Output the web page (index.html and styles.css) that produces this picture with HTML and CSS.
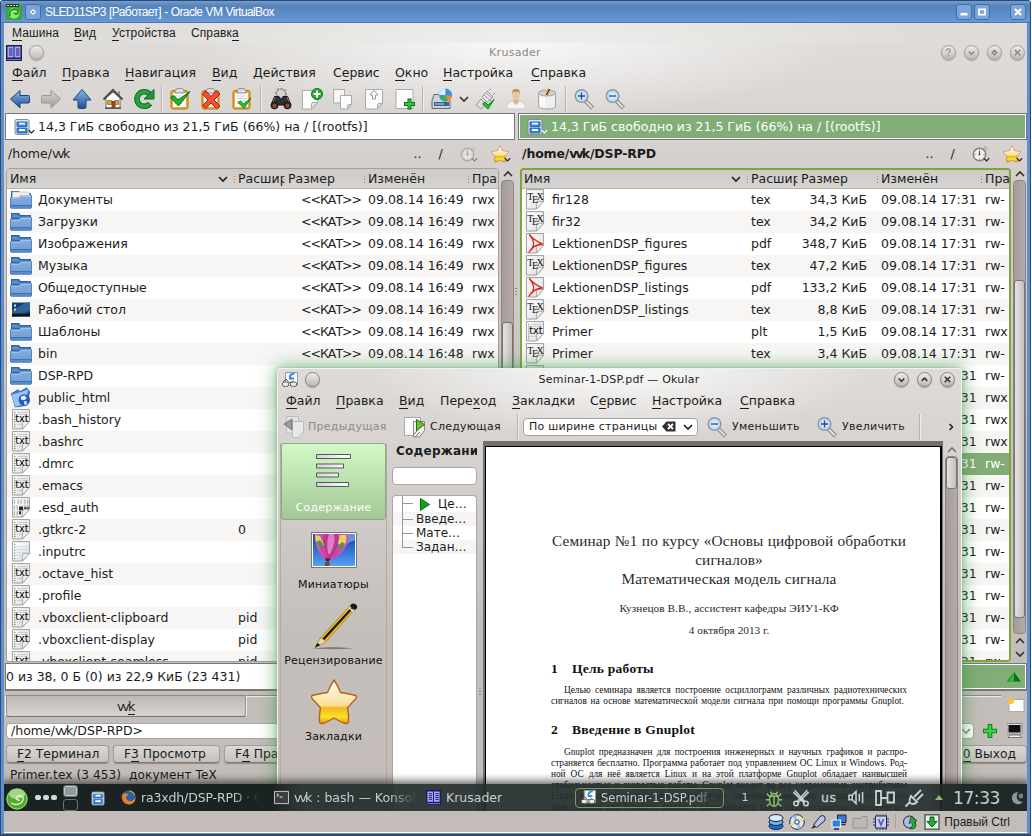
FILE: index.html
```html
<!DOCTYPE html>
<html lang="ru">
<head>
<meta charset="utf-8">
<title>SLED11SP3 [Работает] - Oracle VM VirtualBox</title>
<link rel="stylesheet" href="styles.css">
</head>
<body>
<svg class="defs" aria-hidden="true">
  <defs>
    <linearGradient id="gBlue" x1="0" y1="0" x2="0" y2="1"><stop offset="0" stop-color="#8db9e8"/><stop offset="1" stop-color="#1c4f94"/></linearGradient>
    <linearGradient id="gGray" x1="0" y1="0" x2="0" y2="1"><stop offset="0" stop-color="#d8d8d8"/><stop offset="1" stop-color="#9a9a9a"/></linearGradient>
    <linearGradient id="gGreen" x1="0" y1="0" x2="0" y2="1"><stop offset="0" stop-color="#3cc44c"/><stop offset="1" stop-color="#0a6e1c"/></linearGradient>
    <linearGradient id="gFold" x1="0" y1="0" x2="0" y2="1"><stop offset="0" stop-color="#86afe2"/><stop offset="1" stop-color="#6f9bd2"/></linearGradient>
    <linearGradient id="gPaper" x1="0" y1="0" x2="1" y2="1"><stop offset="0" stop-color="#fff"/><stop offset="1" stop-color="#dcdcdc"/></linearGradient>
    <linearGradient id="gStar" x1="0" y1="0" x2="0" y2="1"><stop offset="0" stop-color="#fffdf6"/><stop offset=".58" stop-color="#fbdf9a"/><stop offset=".64" stop-color="#f2b81c"/><stop offset=".85" stop-color="#fbe32a"/><stop offset="1" stop-color="#e9930c"/></linearGradient>
    <linearGradient id="gSky" x1="0" y1="0" x2="0" y2="1"><stop offset="0" stop-color="#0b3fae"/><stop offset="1" stop-color="#54a2f4"/></linearGradient>
    <linearGradient id="gBar" x1="0" y1="0" x2="1" y2="0"><stop offset="0" stop-color="#d4d4dc"/><stop offset="1" stop-color="#fff"/></linearGradient>
    <radialGradient id="gLens"><stop offset="0" stop-color="#eef6ff"/><stop offset="1" stop-color="#b5d2f2"/></radialGradient>

    <symbol id="left" viewBox="0 0 22 22"><path d="M1.5 11 L11 2.500 V7.500 H19.500 Q20.500 7.500 20.500 8.500 V14 Q20.500 15 19.500 15 H11 V20 Z" fill="url(#gBlue)" stroke="#1d4477"/></symbol>
    <symbol id="right" viewBox="0 0 22 22"><path d="M20.5 11 L11 2.500 V7.500 H2.500 Q1.500 7.500 1.500 8.500 V14 Q1.500 15 2.500 15 H11 V20 Z" fill="url(#gGray)" stroke="#999"/></symbol>
    <symbol id="up" viewBox="0 0 22 22"><path d="M11 1.500 L20 12 H15 V19 Q15 20.500 13.500 20.500 H8.500 Q7 20.500 7 19 V12 H2 Z" fill="url(#gBlue)" stroke="#1d4477"/></symbol>
    <symbol id="home" viewBox="0 0 22 22"><path d="M16 3h2v5h-2z" fill="#999"/><path d="M4 10 L11 4 L18 10 V20.500 H4Z" fill="#fff" stroke="#666"/><path d="M1.500 11.500 L11 2 L20.500 11.500" fill="none" stroke="#4d4d4d" stroke-width="2"/><path d="M5.500 12.500h4v4h-4zM12.500 12.500h4v4h-4z" fill="#e9a030" stroke="#945b14" stroke-width=".7"/><path d="M9.500 13h4v7h-4z" fill="#8b4a1c"/><path d="M3 20h16" stroke="#555" stroke-width="1.500"/></symbol>
    <symbol id="reload" viewBox="0 0 22 22"><path d="M17 15.500 A7.300 7.300 0 1 1 16.500 6" fill="none" stroke="#0d6b21" stroke-width="5.500"/><path d="M17 15.500 A7.300 7.300 0 1 1 16.500 6" fill="none" stroke="#2ba33c" stroke-width="3.500"/><path d="M21 1.500v9.500H11Z" fill="#23973a" stroke="#0d6b21"/></symbol>
    <symbol id="clip" viewBox="0 0 22 22"><rect x="2" y="2.500" width="17" height="18.500" rx="2" fill="#f0a72e" stroke="#bd7514"/><path d="M4 5h13v14H4z" fill="#fff"/><path d="M6 5V3q0-2.500 4.500-2.500T15 3v2z" fill="#dedede" stroke="#888"/><path d="M6 8h8M6 10.500h9M6 13h9M6 15.500h7" stroke="#ccc"/></symbol>
    <symbol id="clipok" viewBox="0 0 22 22"><use href="#clip"/><path d="M1.500 9.500 L5 7.500 L9 12 L21 3.500 L9.500 18Z" fill="#21b42f" stroke="#0a7517"/></symbol>
    <symbol id="clipx" viewBox="0 0 22 22"><use href="#clip"/><path d="M2.500 6 L6 3 L11 8.500 L16 3 L20 6 L14 12 L20 18 L16.500 20.500 L11 15 L6 20.500 L2.500 17.500 L8 12Z" fill="#f4502d" stroke="#a91b0b"/></symbol>
    <symbol id="clipsm" viewBox="0 0 22 22"><use href="#clip"/><path d="M7 14.500 L9.500 13 L12.500 16 L20 10 L13 20.500Z" fill="#21c42f" stroke="#0a7517" stroke-width=".8"/></symbol>
    <symbol id="find" viewBox="0 0 22 22"><circle cx="11" cy="5.500" r="4.500" fill="#d2d2d2" stroke="#888"/><circle cx="11" cy="5.500" r="5.300" fill="none" stroke="#999" stroke-width="1.600" stroke-dasharray="2 2"/><path d="M4.500 8.500 H9 L10 11 H12 L13 8.500 H17.500 L21 17 H1Z" fill="#303030" stroke="#161616"/><path d="M5 9l-2 5M17 9l2 5" stroke="#777"/><circle cx="4.500" cy="17.500" r="3.800" fill="#1c1c1c"/><circle cx="17.500" cy="17.500" r="3.800" fill="#1c1c1c"/><circle cx="4.500" cy="17.800" r="2.200" fill="#9a4a2a"/><circle cx="17.500" cy="17.800" r="2.200" fill="#9a4a2a"/></symbol>
    <symbol id="newtab" viewBox="0 0 22 22"><path d="M1.500 2.500h15v12l-6 6.500h-9z" fill="#fff" stroke="#aaa"/><path d="M10.500 21v-5q0-1.500 1.500-1.500h4.500z" fill="#e4e4e4" stroke="#aaa"/><circle cx="16" cy="6" r="5.500" fill="#28a832" stroke="#0f7a1a"/><path d="M16 2.500v7M12.500 6h7" stroke="#fff" stroke-width="2"/></symbol>
    <symbol id="duptab" viewBox="0 0 22 22"><path d="M1.500 1.500h11v10l-3 3.500h-8z" fill="#f6f6f6" stroke="#aaa"/><path d="M8.500 7.500h11v9l-4 4.500h-7z" fill="#fdfdfd" stroke="#aaa"/><path d="M15.500 21v-3q0-1.500 1.500-1.500h2.500z" fill="#ddd" stroke="#aaa"/></symbol>
    <symbol id="tabup" viewBox="0 0 22 22"><path d="M2.500 1.500h17v14l-5 5.500h-12z" fill="#fbfbfb" stroke="#aaa"/><path d="M14.500 21v-4q0-1.500 1.500-1.500h3.500z" fill="#ddd" stroke="#aaa"/><path d="M11 2.500l4 4.500h-2.500v4h-3V7H7z" fill="#fff" stroke="#999"/></symbol>
    <symbol id="tabadd" viewBox="0 0 22 22"><path d="M2 1.500h17v19H2z" fill="#fdfdfd" stroke="#aaa"/><path d="M15.500 10.500v11M10 16h11" stroke="#0e7217" stroke-width="4"/><path d="M15.500 11.500v9M11 16h9" stroke="#37c43c" stroke-width="2"/></symbol>
    <symbol id="disk" viewBox="0 0 22 22"><path d="M3 6.500h12l4 6v8H1v-8z" fill="#ccd3da" stroke="#667"/><path d="M3 14h15v4H3z" fill="#3a6494"/><path d="M4 16h9" stroke="#b4d8ff"/><circle cx="14.500" cy="7" r="6.500" fill="#3d8ee0"/><path d="M14.500 7V.500A6.500 6.500 0 0 0 8 7Z" fill="#d4efff"/><path d="M14.500 7L8.800 10A6.500 6.500 0 0 0 16 13.300Z" fill="#3fb34a"/><path d="M14.500 7L21 8A6.500 6.500 0 0 1 17 13Z" fill="#f08a1c"/></symbol>
    <symbol id="plug" viewBox="0 0 22 22"><path d="M2 17L7 11l5 5-5 5z" fill="#ddd" stroke="#999"/><path d="M8 9l5-6 6 6-6 5z" fill="#e9e9e9" stroke="#999"/><path d="M10 7l7 6M12 5l6 5M15 2l2-1M19 7l2-2" stroke="#999"/><path d="M8.500 16L11 14l3 3 6-5.500-6 9.500z" fill="#21c42f" stroke="#0a7517" stroke-width=".9"/></symbol>
    <symbol id="user" viewBox="0 0 22 22"><path d="M1.500 21q0-7 6-8h7q6 1 6 8z" fill="#f3f4f8" stroke="#c9cad2"/><path d="M9 10h4l1 4-3 3-3-3z" fill="#dcb48c"/><ellipse cx="11" cy="6.500" rx="4" ry="5.200" fill="#e8c6a2"/><path d="M6.800 6q0-5 4.200-5t4.200 5l-1-2.200H8z" fill="#b58a5c"/></symbol>
    <symbol id="bin" viewBox="0 0 22 22"><path d="M2.500 5v13q0 3 8.500 3t8.500-3V5z" fill="#efefef" stroke="#a5a5a5"/><ellipse cx="11" cy="5" rx="8.500" ry="3" fill="#cfcfcf" stroke="#a5a5a5"/><path d="M5 9v9M8 9.500v10" stroke="#fff" stroke-width="2"/><path d="M10.500 7L13.500 1" stroke="#dca821" stroke-width="3"/><path d="M10.500 7L13.500 1" stroke="#222"/></symbol>
    <symbol id="zin" viewBox="0 0 22 22"><path d="M12.500 13L19.500 20" stroke="#888" stroke-width="4"/><path d="M13 13.500L19 19.500" stroke="#e3e3e3" stroke-width="2"/><circle cx="8.500" cy="8" r="6.300" fill="url(#gLens)" stroke="#8c9bab" stroke-width="1.500"/><path d="M5 8h7M8.500 4.500v7" stroke="#234b83" stroke-width="1.300"/></symbol>
    <symbol id="zout" viewBox="0 0 22 22"><path d="M12.500 13L19.500 20" stroke="#888" stroke-width="4"/><path d="M13 13.500L19 19.500" stroke="#e3e3e3" stroke-width="2"/><circle cx="8.500" cy="8" r="6.300" fill="url(#gLens)" stroke="#8c9bab" stroke-width="1.500"/><path d="M5 8h7" stroke="#234b83" stroke-width="1.300"/></symbol>
    <symbol id="chev" viewBox="0 0 10 10"><path d="M1 3l4 4 4-4" fill="none" stroke="currentColor" stroke-width="1.600"/></symbol>
    <symbol id="chevup" viewBox="0 0 10 10"><path d="M1 7l4-4 4 4" fill="none" stroke="currentColor" stroke-width="1.600"/></symbol>

    <symbol id="cab" viewBox="0 0 16 16"><rect x="1" y=".500" width="14" height="15" rx="1.500" fill="#d8e2ee" stroke="#7d8b9b"/><path d="M3 3h10v4.500H3zM3 9h10v5H3z" fill="#3a86dc" stroke="#1d5cab" stroke-width=".8"/><path d="M5 4.700h6M5 11h6" stroke="#fff" stroke-width="1.800"/></symbol>
    <symbol id="clock" viewBox="0 0 16 16"><circle cx="7.500" cy="8.500" r="6.200" fill="#f2f2f2" stroke="#858585" stroke-width="1.500"/><circle cx="13.500" cy="2.500" r="1.500" fill="#ddd" stroke="#999"/><path d="M7.500 8.500V5" stroke="#c33" stroke-width="1.200"/><circle cx="7.500" cy="8.500" r="1" fill="#555"/><path d="M7.500 3.500v1M7.500 12.500v1M2.500 8.500h1M11.500 8.500h1" stroke="#777"/></symbol>
    <symbol id="star" viewBox="0 0 48 48"><path d="M24 2 Q28 8 30.500 14.500 Q38 15.500 46 17.500 Q47 19 46 20.500 Q41.500 25 37.500 30 Q39 37 38.500 44.500 Q37 46 35.500 45.500 Q29.500 43.500 24 40 Q18.500 43.500 12.500 45.500 Q11 46 9.500 44.500 Q9 37 10.500 30 Q6.500 25 2 20.500 Q1 19 2 17.500 Q10 15.500 17.500 14.500 Q20 8 24 2Z" fill="url(#gStar)" stroke="#b4641a" stroke-width="1.400" stroke-linejoin="round"/></symbol>

    <symbol id="folder" viewBox="0 0 22 20"><path d="M1 19V1.500H9l1.500 2H21V19z" fill="#2f64a5"/><path d="M2 6V3h6l1.500 2H20v2z" fill="#5b8fd0"/><path d="M.500 18.500V8H9l2-2h10.500v12.500z" fill="url(#gFold)" stroke="#3c71b3" stroke-width=".8"/><path d="M1 8.600H9.200l2-2H21" fill="none" stroke="#b5dcf8" stroke-width=".8"/><path d="M.500 15.500h21v1.500H.500z" fill="#3f73b3"/></symbol>
    <symbol id="folderdoc" viewBox="0 0 22 20"><use href="#folder"/><path d="M2.500 2.500h17V6h-9l-2 2h-6z" fill="#f1f1ee" stroke="#bbb" stroke-width=".6"/></symbol>
    <symbol id="desk" viewBox="0 0 22 20"><path d="M2 3h18v14H2z" fill="#163f74"/><path d="M2 17V11L16 3h4v8L8 17z" fill="#2c6699"/><path d="M2 14h18v3H2z" fill="#0b1524"/><path d="M4 5h2v2H4z" fill="#9fd"/><path d="M4 9h2v2H4z" fill="#dc7"/></symbol>
    <symbol id="html" viewBox="0 0 22 22"><path d="M1 7L8 3l2 2 7-4 3 4-3 14-12 2z" fill="#3c7fd8" stroke="#2359a8"/><path d="M1 8l11-3 7-3-5 16-9 3z" fill="#94c5f8"/><circle cx="14.500" cy="13.500" r="6" fill="#2b5bc0"/><path d="M11 10l4-1 2 3-3 2-3-1zM14 15l3 0 0 3-2 1z" fill="#e8f2ff"/></symbol>
    <symbol id="page" viewBox="0 0 20 22"><path d="M1 .600h18v12.400l-7.500 8H1z" fill="url(#gPaper)" stroke="#999"/><path d="M11.500 21v-6q0-2 2-2H19z" fill="#eee" stroke="#999" stroke-width=".8"/></symbol>
    <symbol id="txt" viewBox="0 0 20 22"><use href="#page"/><path d="M3.500 3v16" stroke="#444" stroke-dasharray="1 1.500"/><path d="M6 3.500h11M6 5.500h11M6 16h5" stroke="#bbb" stroke-width=".8"/><text x="4" y="14" font-family="DejaVu Sans, sans-serif" font-size="11" fill="#000" textLength="14" lengthAdjust="spacingAndGlyphs">txt</text></symbol>
    <symbol id="tex" viewBox="0 0 20 22"><use href="#page"/><text font-family="Liberation Serif, serif" font-size="10.500" fill="#111"><tspan x="2" y="12">T</tspan><tspan x="6.800" y="14.500">E</tspan><tspan x="11.500" y="12">X</tspan></text></symbol>
    <symbol id="pdf" viewBox="0 0 20 22"><use href="#page"/><path d="M4 1.500Q9 8 18 11.500M18 11.500Q8 12 3.500 20.500M4 1.500Q12 10 6 18" fill="none" stroke="#e2211c" stroke-width="1.500"/></symbol>
    <symbol id="note" viewBox="0 0 20 22"><use href="#page"/><path d="M3.500 3v16" stroke="#555" stroke-dasharray="1 2"/><path d="M5 6h13M5 9h13M5 12h12M5 15h6" stroke="#b5d6f2" stroke-width=".8"/></symbol>
    <symbol id="binf" viewBox="0 0 20 22"><use href="#page"/><path d="M3 3v4M7 3v4M10 3v4M14 3v4M17 3v4M3 9v4M6 9v4M14 8v3M17 8v3M3 15v4M6 15v4" stroke="#aaa" stroke-width="1.200"/><path d="M8 10h4v4H8zM8 15h2v3H8z" fill="#222"/><path d="M13 10.500h3v2h-3zM16.500 10.500h2v2h-2z" fill="#555"/></symbol>

    <symbol id="krus" viewBox="0 0 16 16"><path d="M0 0h16v16H0z" fill="#1d1d58"/><path d="M1.500 1.500h6v11h-6zM8.500 1.500h6v11h-6z" fill="#a5a5ff"/><path d="M3 4h3.500M3 6h3.500M3 8h3.500M3 10h3.500M10 4h3.500M10 6h3.500M10 8h3.500M10 10h3.500" stroke="#20205c" stroke-width="1"/><path d="M1 14.500h14" stroke="#7a7ad0"/></symbol>
    <symbol id="oku" viewBox="0 0 16 16"><path d="M3.500.500h12v13h-12z" fill="#f7f7f7" stroke="#999"/><path d="M12.500 1.500q-5 0-4.500 5h4" fill="none" stroke="#2a8ade" stroke-width="2"/><path d="M.500 11q0-1 3-1t3 1v2q0 1.500-3 1.500t-3-1.500zM8.500 11q0-1 3-1t3 1v2q0 1.500-3 1.500t-3-1.500z" fill="#ececec" stroke="#555" stroke-width=".9"/><path d="M1 10l3-3 3 3.500h2L11.500 9" fill="none" stroke="#555"/></symbol>
    <symbol id="prev" viewBox="0 0 22 22"><path d="M4.500.500h12V17h-12z" fill="#e6e4e3" stroke="#bbb"/><path d="M10.500 5.500h11v10l-5 6h-6z" fill="#ebe9e8" stroke="#bbb"/><path d="M2 8l8-5v11z" fill="#9a9a9a" stroke="#777"/></symbol>
    <symbol id="next" viewBox="0 0 22 22"><path d="M.500 1.500h16v18h-16z" fill="#fcfcfc" stroke="#a9a9a9"/><path d="M9.500 5.500h11v9l-5 6.500h-6z" fill="#efefef" stroke="#888"/><path d="M12.500 3.500l8 5-8 6z" fill="#6cc42c" stroke="#2c6c10"/><path d="M9 19l5-5M11 21l5-5" stroke="#777"/></symbol>
    <symbol id="pencil" viewBox="0 0 48 48"><path d="M2 46.500q20-3 42 0q-20 1.500-42 0z" fill="#000" opacity=".35"/><path d="M5 45.500L10.500 36L40.500 3.500L45 7L15.500 40Z" fill="#f2c12a" stroke="#8a6a10" stroke-width=".7"/><path d="M12 37L42 4.500l1.700 1.400L14 38.600z" fill="#1c1c1c"/><path d="M5 45.500L10.500 36L13 37L15.500 40Z" fill="#ead9a6" stroke="#998657" stroke-width=".5"/><path d="M5 45.500L7.500 41L10.300 43Z" fill="#111"/><path d="M40 4Q42 0 46 2.500Q49 5.500 45 8z" fill="#161616"/><path d="M38.800 5.500l4.600 4" stroke="#e8e8e8" stroke-width="1.600"/></symbol>
    <symbol id="toc" viewBox="0 0 36 34"><g fill="url(#gBar)" stroke="#555a55"><path d="M.500.500h34v4h-34zM.500 10h27v4h-27zM.500 19h22v4h-22zM.500 28.500h32v4h-32z"/></g></symbol>
    <symbol id="balloon" viewBox="0 0 46 36"><path d="M.500.500h45v35h-45z" fill="#fff" stroke="#777"/><path d="M2 2h42v32H2z" fill="url(#gSky)"/><path d="M44 2v6q-12 4-20 14l9-20z" fill="#8fb4e8" opacity=".7"/><path d="M3.500 2H36Q40 13 29 22L20 28H14Q3 16 3.500 2z" fill="#d04fb0"/><path d="M13 2h14q3 9-4 20l-4 5h-4Q10 12 13 2z" fill="#b23d90"/><path d="M18 2h5q2 9-4 20h-2Q15 10 18 2z" fill="#e07cc8"/><path d="M4 3l5 1 4 9-4 4Q4 10 4 3zM29 3l6 0q2 8-4 13l-4-5z" fill="#e8cf62"/><path d="M5 10l4-2 4 6-4 3zM31 10l3 2-4 7-4-4z" fill="#5f8a66"/><path d="M9 16l5-1 2 11h-2zM26 17l3 3-7 7-1-2z" fill="#dd3aa6"/><path d="M14 26.500h6l-2.500 3h-2z" fill="#4b1d30"/><path d="M14 30h4.500v4H14z" fill="#7a4a22"/></symbol>
  </defs>
</svg>

<div class="vm">
  <header class="vm-title">
    <svg class="vm-logo" viewBox="0 0 16 16"><path d="M0 0h16v16H0z" fill="#39a839"/><path d="M0 0h13v3H0z" fill="#333"/><path d="M1 1.500h11" stroke="#ddd" stroke-dasharray="2 1"/><circle cx="8" cy="9" r="5.500" fill="#8bea74"/><path d="M4 12q-2-6 4-7 5 0 4 4-2 2-4 0" fill="none" stroke="#18801c" stroke-width="1.500"/></svg>
    <span class="tbtn"><svg viewBox="0 0 16 16"><path d="M8 4.500L11.500 8 8 11.500 4.500 8z" fill="#fff"/><path d="M7 7h2v2H7z" fill="#4f80bd"/></svg></span>
    <span class="vm-name">SLED11SP3 [Работает] - Oracle VM VirtualBox</span>
    <span class="tbtn"><svg viewBox="0 0 16 16"><path d="M4 10.500h8" stroke="#fff" stroke-width="3"/></svg></span>
    <span class="tbtn"><svg viewBox="0 0 16 16"><path d="M4.500 5h7v6h-7z" fill="none" stroke="#fff" stroke-width="2"/></svg></span>
    <span class="tbtn last"><svg viewBox="0 0 16 16"><path d="M4.500 4.500l7 7M11.500 4.500l-7 7" stroke="#fff" stroke-width="2.500"/></svg></span>
  </header>

  <div class="vm-body">
    <nav class="vm-menu"><span><u>М</u>ашина</span><span><u>В</u>ид</span><span><u>У</u>стройства</span><span>Справк<u>а</u></span></nav>

    <div class="guest">
      <div class="kr-title">
        <svg class="i16"><use href="#krus"/></svg><i class="orb"></i>
        <span class="kr-name">Krusader</span>
        <i class="orb"><svg viewBox="0 0 14 14"><path d="M5 5q0-2 2-2t2 2q0 1-2 2.500M7 9.500v1.500" fill="none" stroke="#888" stroke-width="1.200"/></svg></i>
        <i class="orb"><svg viewBox="0 0 14 14"><path d="M4 6l3 3 3-3" fill="none" stroke="#888" stroke-width="1.500"/></svg></i>
        <i class="orb"><svg viewBox="0 0 14 14"><path d="M7 4.500L9.500 7 7 9.500 4.500 7z" fill="none" stroke="#888" stroke-width="1.500"/></svg></i>
        <i class="orb"><svg viewBox="0 0 14 14"><path d="M4 4l6 6M10 4l-6 6" stroke="#888" stroke-width="1.500"/></svg></i>
      </div>
      <nav class="kr-menu"><span><u>Ф</u>айл</span><span><u>П</u>равка</span><span><u>Н</u>авигация</span><span><u>В</u>ид</span><span>Дей<u>с</u>твия</span><span>С<u>е</u>рвис</span><span><u>О</u>кно</span><span><u>Н</u>астройка</span><span><u>С</u>правка</span></nav>
      <div class="kr-tools">
        <svg><use href="#left"/></svg><svg><use href="#right"/></svg><svg><use href="#up"/></svg><svg><use href="#home"/></svg><svg><use href="#reload"/></svg>
        <b class="s6"></b><svg><use href="#clipok"/></svg><svg><use href="#clipx"/></svg><svg><use href="#clipsm"/></svg>
        <b class="s8"></b><svg><use href="#find"/></svg><svg><use href="#newtab"/></svg><svg><use href="#duptab"/></svg><svg><use href="#tabup"/></svg><svg><use href="#tabadd"/></svg>
        <b class="s7"></b><svg><use href="#disk"/></svg><svg class="arr"><use href="#chev"/></svg><svg><use href="#plug"/></svg><svg><use href="#user"/></svg><svg><use href="#bin"/></svg>
        <b class="s6"></b><svg><use href="#zin"/></svg><svg><use href="#zout"/></svg>
      </div>

      <div class="panels">
        <section class="panel pl">
          <div class="info"><svg class="i16"><use href="#cab"/></svg><svg class="tiny"><use href="#chev"/></svg><span>14,3 ГиБ свободно из 21,5 ГиБ (66%) на / [(rootfs)]</span></div>
          <div class="path"><span class="where">/home/<s>vv</s>k</span><span class="pb">..</span><span class="pb">/</span><span class="pi off"><svg class="i16"><use href="#clock"/></svg><svg class="tiny"><use href="#chev"/></svg></span><span class="pi"><svg class="i18"><use href="#star"/></svg><svg class="tiny"><use href="#chev"/></svg></span></div>
          <div class="listwrap">
            <div class="list">
              <div class="head"><span class="h1">Имя<svg><use href="#chev"/></svg></span><span>Расшир</span><span>Размер</span><span>Изменён</span><span>Пра</span></div>
              <div class="rows">
                <div class="row"><svg><use href="#folderdoc"/></svg><span>Документы</span><span></span><span>&lt;&lt;КАТ&gt;&gt;</span><span>09.08.14 16:49</span><span>rwx</span></div>
                <div class="row"><svg><use href="#folder"/></svg><span>Загрузки</span><span></span><span>&lt;&lt;КАТ&gt;&gt;</span><span>09.08.14 16:49</span><span>rwx</span></div>
                <div class="row"><svg><use href="#folder"/></svg><span>Изображения</span><span></span><span>&lt;&lt;КАТ&gt;&gt;</span><span>09.08.14 16:49</span><span>rwx</span></div>
                <div class="row"><svg><use href="#folder"/></svg><span>Музыка</span><span></span><span>&lt;&lt;КАТ&gt;&gt;</span><span>09.08.14 16:49</span><span>rwx</span></div>
                <div class="row"><svg><use href="#folder"/></svg><span>Общедоступные</span><span></span><span>&lt;&lt;КАТ&gt;&gt;</span><span>09.08.14 16:49</span><span>rwx</span></div>
                <div class="row"><svg><use href="#desk"/></svg><span>Рабочий стол</span><span></span><span>&lt;&lt;КАТ&gt;&gt;</span><span>09.08.14 16:49</span><span>rwx</span></div>
                <div class="row"><svg><use href="#folder"/></svg><span>Шаблоны</span><span></span><span>&lt;&lt;КАТ&gt;&gt;</span><span>09.08.14 16:49</span><span>rwx</span></div>
                <div class="row"><svg><use href="#folder"/></svg><span>bin</span><span></span><span>&lt;&lt;КАТ&gt;&gt;</span><span>09.08.14 16:48</span><span>rwx</span></div>
                <div class="row"><svg><use href="#folder"/></svg><span>DSP-RPD</span></div>
                <div class="row"><svg><use href="#html"/></svg><span>public_html</span></div>
                <div class="row"><svg><use href="#txt"/></svg><span>.bash_history</span></div>
                <div class="row"><svg><use href="#txt"/></svg><span>.bashrc</span></div>
                <div class="row"><svg><use href="#txt"/></svg><span>.dmrc</span></div>
                <div class="row"><svg><use href="#txt"/></svg><span>.emacs</span></div>
                <div class="row"><svg><use href="#binf"/></svg><span>.esd_auth</span></div>
                <div class="row"><svg><use href="#txt"/></svg><span>.gtkrc-2</span><span>0</span></div>
                <div class="row"><svg><use href="#note"/></svg><span>.inputrc</span></div>
                <div class="row"><svg><use href="#txt"/></svg><span>.octave_hist</span></div>
                <div class="row"><svg><use href="#txt"/></svg><span>.profile</span></div>
                <div class="row"><svg><use href="#txt"/></svg><span>.vboxclient-clipboard</span><span>pid</span></div>
                <div class="row"><svg><use href="#txt"/></svg><span>.vboxclient-display</span><span>pid</span></div>
                <div class="row"><svg><use href="#txt"/></svg><span>.vboxclient-seamless</span><span>pid</span></div>
              </div>
            </div>
            <div class="sb"><svg><use href="#chevup"/></svg><div class="trough"><i class="thumb tl"></i></div><svg><use href="#chevup"/></svg><svg><use href="#chev"/></svg></div>
          </div>
          <div class="totals">0 из 38, 0 Б (0) из 22,9 КиБ (23 431)</div>
          <div class="tabs"><span class="tab"><s>vv</s><u>k</u></span></div>
        </section>
        <div class="split"><i class="grip"></i></div>
        <section class="panel pr">
          <div class="info"><svg class="i16"><use href="#cab"/></svg><svg class="tiny"><use href="#chev"/></svg><span>14,3 ГиБ свободно из 21,5 ГиБ (66%) на / [(rootfs)]</span></div>
          <div class="path"><span class="where">/home/<s>vv</s>k/DSP-RPD</span><span class="pb">..</span><span class="pb">/</span><span class="pi"><svg class="i16"><use href="#clock"/></svg><svg class="tiny"><use href="#chev"/></svg></span><span class="pi"><svg class="i18"><use href="#star"/></svg><svg class="tiny"><use href="#chev"/></svg></span></div>
          <div class="listwrap">
            <div class="list">
              <div class="head"><span class="h1">Имя<svg><use href="#chev"/></svg></span><span>Расшир</span><span>Размер</span><span>Изменён</span><span>Пра</span></div>
              <div class="rows">
                <div class="row"><svg><use href="#tex"/></svg><span>fir128</span><span>tex</span><span>34,3 КиБ</span><span>09.08.14 17:31</span><span>rw-</span></div>
                <div class="row"><svg><use href="#tex"/></svg><span>fir32</span><span>tex</span><span>34,2 КиБ</span><span>09.08.14 17:31</span><span>rw-</span></div>
                <div class="row"><svg><use href="#pdf"/></svg><span>LektionenDSP_figures</span><span>pdf</span><span>348,7 КиБ</span><span>09.08.14 17:31</span><span>rw-</span></div>
                <div class="row"><svg><use href="#tex"/></svg><span>LektionenDSP_figures</span><span>tex</span><span>47,2 КиБ</span><span>09.08.14 17:31</span><span>rw-</span></div>
                <div class="row"><svg><use href="#pdf"/></svg><span>LektionenDSP_listings</span><span>pdf</span><span>133,2 КиБ</span><span>09.08.14 17:31</span><span>rw-</span></div>
                <div class="row"><svg><use href="#tex"/></svg><span>LektionenDSP_listings</span><span>tex</span><span>8,8 КиБ</span><span>09.08.14 17:31</span><span>rw-</span></div>
                <div class="row"><svg><use href="#txt"/></svg><span>Primer</span><span>plt</span><span>1,5 КиБ</span><span>09.08.14 17:31</span><span>rwx</span></div>
                <div class="row"><svg><use href="#tex"/></svg><span>Primer</span><span>tex</span><span>3,4 КиБ</span><span>09.08.14 17:31</span><span>rw-</span></div>
                <div class="row"><svg><use href="#tex"/></svg><span></span><span></span><span></span><span>09.08.14 17:31</span><span>rw-</span></div>
                <div class="row"><i></i><span></span><span></span><span></span><span>09.08.14 17:31</span><span>rwx</span></div>
                <div class="row"><i></i><span></span><span></span><span></span><span>09.08.14 17:31</span><span>rwx</span></div>
                <div class="row"><i></i><span></span><span></span><span></span><span>09.08.14 17:31</span><span>rwx</span></div>
                <div class="row sel"><i></i><span></span><span></span><span></span><span>09.08.14 17:31</span><span>rw-</span></div>
                <div class="row"><i></i><span></span><span></span><span></span><span>09.08.14 17:31</span><span>rw-</span></div>
                <div class="row"><i></i><span></span><span></span><span></span><span>09.08.14 17:31</span><span>rw-</span></div>
                <div class="row"><i></i><span></span><span></span><span></span><span>09.08.14 17:31</span><span>rw-</span></div>
                <div class="row"><i></i><span></span><span></span><span></span><span>09.08.14 17:31</span><span>rw-</span></div>
                <div class="row"><i></i><span></span><span></span><span></span><span>09.08.14 17:31</span><span>rw-</span></div>
                <div class="row"><i></i><span></span><span></span><span></span><span>09.08.14 17:31</span><span>rw-</span></div>
                <div class="row"><i></i><span></span><span></span><span></span><span>09.08.14 17:31</span><span>rw-</span></div>
                <div class="row"><i></i><span></span><span></span><span></span><span>09.08.14 17:31</span><span>rw-</span></div>
                <div class="row"><i></i><span></span><span></span><span></span><span>09.08.14 17:31</span><span>rw-</span></div>
              </div>
            </div>
            <div class="sb"><svg><use href="#chevup"/></svg><div class="trough"><i class="thumb tr"></i></div><svg><use href="#chevup"/></svg><svg><use href="#chev"/></svg></div>
          </div>
          <div class="totals"><svg viewBox="0 0 14 10"><path d="M7 0l7 9.500H0z" fill="#0d6e14"/><path d="M7 0v9.500H1z" fill="#35b53c"/></svg></div>
          <div class="tabs"><svg viewBox="0 0 18 16"><path d="M2 2.500h15v12H2z" fill="#fdfdfd" stroke="#aaa"/><circle cx="4" cy="4" r="3" fill="#f7c531"/></svg></div>
        </section>
      </div>

      <div class="cmd"><span class="cmdline">/home/<s>vv</s>k/DSP-RPD&gt;</span><span class="combo"><svg><use href="#chev"/></svg></span>
        <svg class="i16" viewBox="0 0 16 16"><path d="M8 1v14M1 8h14" stroke="#0c8418" stroke-width="4.600"/><path d="M8 2v12M2 8h12" stroke="#42d14c" stroke-width="2.400"/></svg>
        <svg class="i16" viewBox="0 0 16 16"><path d="M0 .500h15v10.500H0z" fill="#ddd" stroke="#888"/><path d="M1.500 2h12v7.500h-12z" fill="#111"/><path d="M3 12h10l2 2.500H1z" fill="#eee" stroke="#777"/></svg>
      </div>
      <div class="fn"><span><u>F</u>2 Терминал</span><span>F<u>3</u> Просмотр</span><span>F<u>4</u> Правка</span><i></i><span>F1<u>0</u> Выход</span></div>
      <div class="kr-status">Primer.tex (3 453)&nbsp; документ TeX</div>

      <div class="okular">
        <div class="ok-title"><svg class="i16"><use href="#oku"/></svg><i class="orb"></i><span>Seminar-1-DSP.pdf — Okular</span>
          <i class="orb"><svg viewBox="0 0 14 14"><path d="M4 6l3 3 3-3" fill="none" stroke="#333" stroke-width="1.600"/></svg></i>
          <i class="orb"><svg viewBox="0 0 14 14"><path d="M4 8.500l3-3 3 3" fill="none" stroke="#333" stroke-width="1.600"/></svg></i>
          <i class="orb"><svg viewBox="0 0 14 14"><path d="M4 4l6 6M10 4l-6 6" stroke="#333" stroke-width="1.600"/></svg></i>
        </div>
        <nav class="ok-menu"><span><u>Ф</u>айл</span><span><u>П</u>равка</span><span><u>В</u>ид</span><span>Пере<u>х</u>од</span><span><u>З</u>акладки</span><span>С<u>е</u>рвис</span><span><u>Н</u>астройка</span><span><u>С</u>правка</span></nav>
        <div class="ok-tools">
          <svg class="i22"><use href="#prev"/></svg><span class="dim t1">Предыдущая</span>
          <svg class="i22"><use href="#next"/></svg><span class="t2">Следующая</span><b></b>
          <span class="zoombox"><span>По ширине страницы</span><svg class="clr" viewBox="0 0 14 11"><path d="M0 5.500L4.500.500H13.500v10H4.500z" fill="#333"/><path d="M6 3l5 5M11 3L6 8" stroke="#fff" stroke-width="1.800"/></svg><svg class="i10"><use href="#chev"/></svg></span>
          <svg class="i22"><use href="#zout"/></svg><span class="t3">Уменьшить</span>
          <svg class="i22"><use href="#zin"/></svg><span class="t4">Увеличить</span><b></b>
          <svg class="more" viewBox="0 0 6 8"><path d="M1.500 1l3 3-3 3" fill="none" stroke="#222" stroke-width="1.500"/></svg>
        </div>
        <div class="ok-main">
          <div class="side">
            <div class="item on"><svg class="toc"><use href="#toc"/></svg><span>Содержание</span></div>
            <div class="item"><svg class="bal"><use href="#balloon"/></svg><span>Миниатюры</span></div>
            <div class="item"><svg class="i48"><use href="#pencil"/></svg><span>Рецензирование</span></div>
            <div class="item"><svg class="i48"><use href="#star"/></svg><span>Закладки</span></div>
          </div>
          <div class="contents">
            <div class="ctitle">Содержание</div>
            <div class="search"></div>
            <div class="tree">
              <div><i></i><svg viewBox="0 0 10 13"><path d="M.500.500l9 6-9 6z" fill="#13a01f" stroke="#0a7015"/></svg>Це…</div>
              <div><i></i>Введе…</div>
              <div><i></i>Мате…</div>
              <div><i></i>Задан…</div>
            </div>
          </div>
          <div class="oksplit"><i class="grip"></i></div>
          <div class="view">
            <article class="sheet">
              <div class="ln t jt">Семинар №1 по курсу «Основы цифровой обработки</div>
              <div class="ln t">сигналов»</div>
              <div class="ln t">Математическая модель сигнала</div>
              <div class="ln au">Кузнецов В.В., ассистент кафедры ЭИУ1-КФ</div>
              <div class="ln dt">4 октября 2013 г.</div>
              <h2 class="sec1"><span>1</span>Цель работы</h2>
              <div class="ln p in">Целью семинара является построение осциллограмм различных радиотехнических</div>
              <div class="ln p sh">сигналов на основе математической модели сигнала при помощи программы Gnuplot.</div>
              <h2 class="sec2"><span>2</span>Введение в Gnuplot</h2>
              <div class="ln p in">Gnuplot предназначен для построения инженерных и научных графиков и распро-</div>
              <div class="ln p">страняется бесплатно. Программа работает под управлением ОС Linux и Windows. Род-</div>
              <div class="ln p">ной ОС для неё является Linux и на этой платформе Gnuplot обладает наивысшей</div>
              <div class="ln p">стабильностью и скоростью работы. Gnuplot входит во все современные дистрибутивы</div>
              <div class="ln p">Linux и доступен для установки через пакетный менеджер. Скачать установоч-</div>
              <div class="ln p last">щик Gnuplot для Windows можно с официального сайта <code>http://gnuplot.sourceforge.</code></div>
            </article>
          </div>
          <div class="sb ok"><svg><use href="#chevup"/></svg><div class="trough"><i class="thumb to"></i></div></div>
        </div>
      </div>

      <div class="taskbar">
        <svg class="suse" viewBox="0 0 22 22"><circle cx="11" cy="11" r="10.700" fill="#58a72f"/><ellipse cx="11" cy="6" rx="8" ry="5" fill="#a4d68a"/><circle cx="11" cy="11" r="10" fill="none" stroke="#9ed47c"/><path d="M5 15q5 3 10 0 4-4 1-7-5-1-6 2 1 3 4 2" fill="none" stroke="#dff4cf" stroke-width="1.300"/></svg>
        <span class="dots"><i></i><i></i><i></i></span>
        <span class="pager"><i></i><i></i></span>
        <svg class="cabt"><use href="#cab"/></svg>
        <span class="task k1"><svg viewBox="0 0 16 16"><circle cx="8" cy="8" r="7.500" fill="#2a5cb0"/><path d="M1 5Q1 15 9 15.500 16 15 15.500 7 14 12 9 12 5 11 5.500 7L8 5Q5 2 1 5z" fill="#ee7d1b"/><path d="M8 .500q6 0 7.500 6L12 3z" fill="#f6b62c"/></svg><span>ra3xdh/DSP-RPD · G</span></span>
        <span class="task k2"><svg viewBox="0 0 16 16"><path d="M.500 1.500h15v13H.500z" fill="#3b3f3f" stroke="#ccc"/><path d="M3 4l2 1.500L3 7M6 7.500h3" fill="none" stroke="#fff"/></svg><span><s>vv</s>k : bash — Konsole</span></span>
        <span class="task k3"><svg><use href="#krus"/></svg><span>Krusader</span></span>
        <span class="task k4"><svg><use href="#oku"/></svg><span>Seminar-1-DSP.pdf — Okular</span></span>
        <span class="num">1</span>
        <svg class="tray y1" viewBox="0 0 20 22" fill="none" stroke="#86c070" stroke-width="1.600"><ellipse cx="10" cy="13" rx="5" ry="7"/><path d="M10 8v12M5.500 9h9M6 4l2 3M14 4l-2 3M1 13h4M15 13h4M2 6l3.500 4M18 6l-3.500 4M2 20l3.500-3M18 20l-3.500-3"/></svg>
        <svg class="tray y2" viewBox="0 0 20 20" fill="none" stroke="#c8d4d4" stroke-width="1.700"><path d="M3 1.500l11.500 13M17 1.500L5 14.500M1.500 3.500l12 12M18.500 3.500l-12 12"/><circle cx="4.500" cy="16" r="2.500"/><circle cx="15.500" cy="16" r="2.500"/></svg>
        <span class="us">us</span>
        <svg class="tray y3" viewBox="0 0 18 16" fill="none" stroke="#c8d4d4" stroke-width="1.600"><path d="M1 5.500h3.500v5H1zM4.500 5.500l4-4v13l-4-4M12 4v8M15.500 2v12"/></svg>
        <svg class="tray y4" viewBox="0 0 20 16" fill="none" stroke="#c8d4d4" stroke-width="1.800"><path d="M1 1h5v14H1zM6 8h6M19 2.500h-6.500v10H19z"/></svg>
        <svg class="tray y5" viewBox="0 0 20 20" fill="none" stroke="#c8d4d4" stroke-width="1.800"><path d="M1.500 18.500l4-4M7 8l6 6q-3 3-6 1.500T7 8zM10 9l7-7M13 12l6-6"/></svg>
        <svg class="tri" viewBox="0 0 8 5"><path d="M4 0l4 5H0z" fill="#86c070"/></svg>
        <span class="time">17:33</span>
        <svg class="cash" viewBox="0 0 12 14"><path d="M7 1Q0 2 1 8t8 5l3-2-4-1Q4 8 7 1z" fill="#8c9797"/><circle cx="10" cy="5" r="2.500" fill="#707b7b"/></svg>
      </div>
    </div>

    <footer class="vm-status">
      <svg viewBox="0 0 16 16"><ellipse cx="8" cy="12" rx="7" ry="3.500" fill="#1a6fd4" stroke="#123"/><ellipse cx="8" cy="8" rx="7" ry="3.500" fill="#6eb3f5" stroke="#123"/><ellipse cx="8" cy="4" rx="7" ry="3.500" fill="#d7ecff" stroke="#123"/></svg>
      <svg viewBox="0 0 16 16"><circle cx="8" cy="8" r="7.300" fill="#dfe6f2" stroke="#1d2c55"/><path d="M8 8L3 2l4-1zM8 8l5 6-4 1z" fill="#7bc4f0"/><path d="M8 8L1 10v3zM8 8l7-2v-3z" fill="#f2d277"/><circle cx="8" cy="8" r="2.200" fill="#fff" stroke="#1d2c55"/></svg>
      <svg viewBox="0 0 16 16"><path d="M1 15l3-4 2 2z" fill="#222"/><path d="M3.500 11L10 2.500q3-2 4.500 0t0 4.500L6.500 13.500z" fill="#b9c3ea" stroke="#223"/></svg>
      <svg viewBox="0 0 16 16"><path d="M6.500 1h8.500v7.500H6.500z" fill="#2a7fe0" stroke="#223"/><path d="M1 6h8.500v7H1z" fill="#2a7fe0" stroke="#eef" stroke-width="1.200"/><path d="M3 15h5M10.500 10.500h4" stroke="#223" stroke-width="1.500"/></svg>
      <svg viewBox="0 0 16 16"><path d="M1 14V4.500h8l1.500-2H15V14z" fill="#bdb8b5" stroke="#96918e"/></svg>
      <svg viewBox="0 0 16 16"><path d="M2.500 2h11v12h-11z" fill="#c6ccf2" stroke="#1d2c66"/><path d="M4 .500v1.500M7 .500v1.500M10 .500v1.500M13 .500v1.500M4 14v2M7 14v2M10 14v2M13 14v2M0 5h2M0 8h2M0 11h2M14 5h2M14 8h2M14 11h2" stroke="#1d2c66"/><path d="M5.500 5L8 11l2.500-6" fill="none" stroke="#4c5aa6" stroke-width="1.500"/></svg>
      <b></b>
      <svg viewBox="0 0 16 16"><circle cx="6.500" cy="8" r="6" fill="#aebbe8" stroke="#223"/><path d="M8 2.500l6 4-2.500 1.500q3 3 0 6.500L7 15q4-4 1.500-6.500L6 9.500z" fill="#2da83b" stroke="#124f19" stroke-width=".8"/></svg>
      <svg viewBox="0 0 16 16"><path d="M1 .800h14v14.400H1z" fill="#e9eef0" stroke="#4e6a54" stroke-width="1.500"/><path d="M6 3h4v4.500h3L8 13 3 7.500h3z" fill="#23ae2e" stroke="#0c6014"/></svg>
      <span>Правый Ctrl</span>
    </footer>
  </div>
</div>
</body>
</html>
```
FILE: styles.css
```css
* { box-sizing: border-box; }
html, body { margin: 0; }
body { width: 1032px; height: 836px; overflow: hidden; background: #fff; color: #1c1c1c; font: 13px/16px "DejaVu Sans", sans-serif; }
.defs { width: 0; height: 0; display: block; }
svg { display: block; flex: none; }
u { text-decoration: none; box-shadow: 0 1px 0 currentColor; }
s { text-decoration: none; letter-spacing: -1.9px; }
i { font-style: normal; }
.i10 { width: 10px; height: 10px; }
.i16 { width: 16px; height: 16px; }
.i18 { width: 18px; height: 18px; }
.i22 { width: 22px; height: 22px; }
.i48 { width: 48px; height: 48px; }
.tiny { width: 7px; height: 7px; align-self: flex-end; }

/* host window */
.vm { width: 1031px; height: 836px; display: flex; flex-direction: column; border: 1px solid #34486a; border-bottom-width: 2px; border-radius: 3px 3px 0 0; background: #5b8fd0; }
.vm-title { height: 22px; flex: none; display: flex; align-items: center; padding: 0 3px 0 5px; background: linear-gradient(#6f9cd2, #5583b9 25%, #6798d5); border-bottom: 1px solid #4a78b5; }
.vm-logo { width: 16px; height: 16px; margin-right: 3px; }
.tbtn { width: 16px; height: 16px; margin-right: 2px; border-radius: 3px; background: #7ba5da; border: 1px solid #3f6ea8; }
.tbtn svg { width: 14px; height: 14px; }
.tbtn.last { margin: 0 1px 0 18px; }
.vm-name { flex: 1; padding-left: 2px; color: #fff; font: 12px/16px "Liberation Sans", sans-serif; letter-spacing: -.62px; word-spacing: .5px; }
.vm-body { flex: 1; margin: 0 3px 1px; background: #c3bcb9; border-bottom: 1px solid #fff; display: flex; flex-direction: column; min-height: 0; }
.vm-menu { height: 20px; flex: none; padding: 2px 0 0 8px; display: grid; grid-template-columns: 62px 38px 79px auto; font: 12px/16px "Liberation Sans", sans-serif; letter-spacing: .1px; background: radial-gradient(420px 60px at 50% 90%, #f0efed, #dedcd9); }

/* guest screen */
.guest { position: relative; height: 768px; flex: none; overflow: hidden; display: flex; flex-direction: column; background: radial-gradient(330px 75px at 50% 0, rgba(255,255,255,.8), rgba(255,255,255,0)), linear-gradient(#dedbd8, #d5d0ce 120px, #c5c0bc 430px, #c3bcb8); }
.orb { width: 15px; height: 15px; flex: none; border-radius: 50%; background: linear-gradient(#ececec, #bcbab8); border: 1px solid #a3a09d; box-shadow: 0 1px 1px rgba(0,0,0,.25); }
.orb svg { width: 13px; height: 13px; }
.kr-title { height: 19px; flex: none; display: flex; align-items: center; padding: 0 2px 0 2px; gap: 8px; }
.kr-title .orb:nth-child(2) { margin-left: -1px; }
.kr-name { flex: 1; text-align: center; color: #8d8a88; font-size: 11px; letter-spacing: .3px; padding-left: 45px; }
.kr-menu { height: 22px; flex: none; padding: 3px 0 0 8px; display: grid; grid-template-columns: 50px 63px 87px 41px 80px 62px 48px 88px auto; font-size: 12.5px; letter-spacing: 0; }
.kr-tools { height: 29px; flex: none; display: flex; align-items: center; }
.kr-tools svg { width: 22px; height: 22px; margin: 0 4.5px; }
.kr-tools .arr { width: 10px; height: 10px; margin: 0 1px; color: #333; }
.kr-tools b { height: 26px; border-left: 1px solid #b8b4b1; box-shadow: inset 1px 0 #efedec; margin: 0 1.5px 0 2px; }
.s6 { width: 2px; } .s8 { width: 4px; } .s7 { width: 3px; }

.panels { display: flex; flex: none; height: 605px; }
.panel { display: flex; flex-direction: column; flex: none; }
.pl { width: 511px; padding-left: 1px; }
.pr { width: 509px; }
.split { width: 3px; display: flex; align-items: center; }
.grip { width: 2px; height: 8px; background: repeating-linear-gradient(#8c8886 0 1px, transparent 1px 3px); }
.split .grip { margin-top: -248px; }
.info { height: 27px; flex: none; display: flex; align-items: center; background: #fff; border: 1px solid #777; box-shadow: inset -1px -1px #fff; padding-left: 8px; font-size: 12.5px; }
.info .tiny { margin: 0 2px 4px -2px; }
.info span { padding-left: 1px; }
.pr .info { background: #82ad76; color: #fff; box-shadow: inset 0 0 0 1px #fff; }
.path { height: 28px; flex: none; display: flex; align-items: center; padding: 0 4px 1px 3px; font-size: 12.5px; }
.pr .path { padding-left: 4px; font-weight: bold; }
.pr .where { letter-spacing: -.15px; }
.where { flex: 1; }
.pb { width: 23px; text-align: center; font-weight: normal; }
.pi { width: 33px; display: flex; justify-content: flex-end; align-items: center; height: 18px; }
.pb + .pi { width: 26px; }
.pi .tiny { margin-left: -5px; }
.off { opacity: .45; }
.listwrap { display: flex; height: 494px; flex: none; }
.list { width: 493px; margin-left: 1px; border: 1px solid #a39f9c; border-radius: 4px; overflow: hidden; display: flex; flex-direction: column; }
.pr .list { border: 2px solid #7ea63a; margin-left: 2px; width: 492px; }
.head { height: 20px; flex: none; display: grid; grid-template-columns: 228px 50px 80px 104px 1fr; padding: 1px 0 0 3px; font-size: 12.5px; background: linear-gradient(#cfcbc8, #d6d3d0); border-bottom: 1px solid #b5b1ae; }
.pr .head { grid-template-columns: 227px 50px 80px 104px 1fr; padding-left: 2px; padding-top: 0; height: 19px; }
.head span { white-space: nowrap; overflow: hidden; line-height: 18px; }
.head span + span { background: repeating-linear-gradient(#8c8886 0 1px, transparent 1px 3px) 0 6px / 1px 8px no-repeat; margin-left: -4px; padding-left: 4px; }
.head span:nth-child(2) { margin-right: 4px; }
.h1 { display: flex; align-items: center; justify-content: space-between; }
.h1 svg { width: 10px; height: 10px; margin-right: 10px; }
.rows { flex: 1; overflow: hidden; background: #fff; }
.row { height: 22px; display: grid; grid-template-columns: 31px 200px 50px 73px 104px auto; font-size: 12.5px; line-height: 22px; white-space: nowrap; justify-content: start; }
.row > span:nth-child(4) { text-align: right; }
.pl .row > span:nth-child(4) { letter-spacing: -1px; }
.row > span:nth-child(5) { padding-left: 7px; }
.row > span:nth-child(6) { padding-left: 7px; }
.row svg { width: 22px; height: 21px; margin: 0 0 0 3px; }
.pr .row { grid-template-columns: 30px 199px 50px 66px 111px auto; }
.pr .row svg { margin-left: 2px; }
.pr .row > span:nth-child(5) { padding-left: 14px; }
.row:nth-child(even) { background: #f7f6f5; }
.pr .row.sel { background: #82ad76; color: #fff; }
.sb { width: 16px; display: flex; flex-direction: column; align-items: center; padding: 1px 0 2px 1px; color: #333; }
.sb svg { width: 12px; height: 10px; margin-bottom: 1px; }
.sb svg + svg { margin-top: 2px; }
.trough { flex: 1; width: 13px; border: 1px solid #8d8784; border-radius: 4px; background: linear-gradient(90deg, #a39b98, #b5aca9); margin-bottom: 2px; overflow: hidden; }
.thumb { display: block; width: 11px; border: 1px solid #777270; border-radius: 3px; background: linear-gradient(90deg, #e5e3e1, #c3bfbc); }
.tl { height: 180px; margin-top: 141px; }
.tr { height: 338px; margin-top: 99px; }
.totals { height: 28px; flex: none; margin-top: 1px; background: #fff; border: 1px solid #777; border-bottom-width: 2px; line-height: 25px; font-size: 12.5px; letter-spacing: 0; display: flex; align-items: center; }
.pr .totals { background: #82ad76; justify-content: flex-end; padding-right: 5px; box-shadow: inset 0 0 0 1px #fff; }
.totals svg { width: 14px; height: 10px; }
.tabs { height: 27px; flex: none; padding-top: 4px; display: flex; }
.tabs::after { content: ""; flex: 1; border-top: 1px solid #8c8886; box-shadow: inset 0 1px #eee; height: 2px; margin-right: 20px; }
.pr .tabs::after { order: -1; margin-right: 6px; }
.tabs svg { width: 18px; height: 16px; margin-right: 2px; margin-top: 2px; }
.tab { width: 242px; height: 22px; text-align: center; line-height: 21px; font-size: 12.5px; border: 1px solid #f2f0ef; border-top-color: #8c8886; border-bottom-color: #77726f; border-radius: 0 0 4px 4px; background: linear-gradient(#bfb9b5, #d6d3d0); box-shadow: inset 1px 0 #938e8b, inset -1px 0 #938e8b; }

.cmd { height: 25px; flex: none; display: flex; align-items: center; padding: 0 4px 0 2px; }
.cmdline { flex: 1; height: 16px; background: #fff; border: 1px solid #aaa5a2; border-radius: 4px 0 0 4px; line-height: 14px; padding-left: 4px; font-size: 12.5px; }
.combo { width: 16px; height: 16px; background: #fff; border: 1px solid #aaa5a2; border-radius: 0 4px 4px 0; padding: 2px; }
.combo svg { width: 10px; height: 10px; color: #888; }
.cmd > svg { margin-left: 8px; }
.cmd > .i16 + .i16 { margin-left: 9px; }
.fn { height: 22px; flex: none; display: flex; gap: 4px; padding: 1px 0 3px 2px; margin-top: 1px; }
.fn span { height: 18px; line-height: 17px; border: 1px solid #a19c99; border-bottom-color: #7f7a77; border-radius: 4px; background: linear-gradient(#dbd8d6, #c5c0bd); box-shadow: 0 1px 1px rgba(0,0,0,.25); font-size: 12.3px; padding: 0 10px; white-space: nowrap; }
.fn span:nth-child(1) { width: 103px; } .fn span:nth-child(2) { width: 107px; } .fn span:nth-child(3) { width: 98px; }
.fn i { flex: 1; }
.kr-status { padding-left: 6px; height: 20px; flex: none; line-height: 19px; font-size: 12.1px; letter-spacing: .1px; }

/* document viewer window */
.okular { position: absolute; left: 273px; top: 325px; width: 685px; height: 480px; border: 1px solid #f3f2f1; border-bottom: 0; border-radius: 4px 4px 0 0; display: flex; flex-direction: column; background: radial-gradient(250px 70px at 50% 0, rgba(255,255,255,.85), rgba(255,255,255,0)), linear-gradient(#dedbd8, #d5d0ce 100px, #c5bfbb 260px, #c3bcb8); box-shadow: 0 0 4px rgba(70,150,80,.5), 0 0 18px 2px rgba(60,145,70,.55); }
.ok-title { height: 21px; flex: none; display: flex; align-items: center; gap: 8px; padding: 0 6px 0 4px; }
.ok-title .i16 { margin-right: -1px; }
.ok-title .orb { border-color: #88847f; }
.ok-title span { flex: 1; text-align: center; font-size: 11px; letter-spacing: .2px; padding-left: 24px; }
.ok-menu { height: 22px; flex: none; display: grid; grid-template-columns: 50px 63px 41px 72px 78px 62px 88px auto; padding: 3px 0 0 8px; font-size: 12.5px; }
.ok-tools { height: 29px; flex: none; display: flex; align-items: center; padding-left: 4px; font-size: 11px; letter-spacing: .25px; }
.ok-tools span { white-space: nowrap; }
.ok-tools > span { padding-left: 4px; }
.t1 { width: 100px; } .t2 { width: 91px; } .t3 { width: 88px; } .t4 { width: 81px; }
.dim { color: #8e8b89; }
.ok-tools b { height: 26px; border-left: 1px solid #b8b4b1; width: 6px; box-shadow: inset 1px 0 #efedec; }
.ok-tools .zoombox { width: 175px; height: 18px; background: #fff; border: 1px solid #a5a19e; border-radius: 4px; display: flex; align-items: center; padding: 0 4px 0 5px; margin-right: 8px; }
.zoombox span { flex: 1; }
.clr { width: 14px; height: 11px; margin-right: 7px; }
.more { width: 6px; height: 8px; margin-left: 23px; }
.ok-main { flex: 1; display: flex; padding-left: 2px; min-height: 0; }
.side { width: 107px; flex: none; border: 1px solid #b0aaa7; border-width: 0 1px; display: flex; flex-direction: column; margin-top: 2px; font-size: 11px; letter-spacing: .2px; color: #111; }
.item { height: 76px; display: flex; flex-direction: column; align-items: center; justify-content: flex-end; padding-bottom: 4px; }
.item.on { height: 77px; color: #fff; background: linear-gradient(#d2fac6, #a3c796); border: 1px solid #8cab80; border-radius: 3px; }
.item span { margin-top: 8px; white-space: nowrap; line-height: 14px; }
.item:nth-child(3) span, .item:nth-child(4) span { margin-top: 4px; }
.toc { width: 36px; height: 34px; margin-bottom: 5px; }
.bal { width: 46px; height: 36px; margin-bottom: 2px; }
.contents { width: 85px; flex: none; margin-left: 5px; display: flex; flex-direction: column; }
.ctitle { height: 24px; padding-left: 4px; line-height: 20px; font-weight: bold; font-size: 12px; letter-spacing: .25px; white-space: nowrap; overflow: hidden; }
.search { height: 18px; margin-top: 2px; background: #fff; border: 1px solid #aaa5a2; border-radius: 4px; }
.tree { flex: 1; margin-top: 10px; background: #fff; border: 1px solid #aaa5a2; border-bottom: 0; border-radius: 4px 4px 0 0; font-size: 12px; overflow: hidden; }
.tree div { height: 14px; line-height: 14px; display: flex; white-space: nowrap; }
.tree div:first-child { height: 16px; line-height: 17px; }
.tree div:nth-child(even) { background: #f6f5f4; }
.tree i { width: 11px; margin: 0 3px 0 9px; border-left: 1px solid #999; background: linear-gradient(#999, #999) 0 7px / 100% 1px no-repeat; }
.tree div:last-child i { height: 8px; }
.tree svg { width: 10px; height: 13px; margin: 2px 8px 0 4px; }
.oksplit { width: 6px; flex: none; display: flex; align-items: center; padding-left: 2px; }
.oksplit .grip { margin-top: 94px; }
.view { width: 460px; flex: none; background: #74706d; padding: 5px 0 0 2px; overflow: hidden; }
.sheet { width: 457px; height: 420px; background: #fff; border: 1px solid #000; border-right-width: 2px; padding: 84px 0 0 65px; font-family: "Liberation Serif", serif; color: #2a2a2a; }
.ln { width: 356px; white-space: nowrap; text-align: center; }
.t { font-size: 15.3px; line-height: 19px; letter-spacing: .12px; }
.jt { text-align-last: justify; padding: 0 1px; }
.au { font-size: 11.3px; line-height: 12px; margin-top: 14px; letter-spacing: .05px; }
.dt { font-size: 11.3px; line-height: 12px; margin-top: 10px; }
.sheet h2 { margin: 0; font-size: 13.5px; line-height: 18px; height: 18px; color: #111; letter-spacing: .25px; }
.sheet h2 span { display: inline-block; width: 21px; }
.sheet .sec1 { margin-top: 24px; }
.sheet .sec2 { margin-top: 14px; }
.p { font-size: 9.3px; line-height: 11px; text-align: justify; text-align-last: justify; white-space: normal; height: 11px; color: #111; }
.sec1 + .p { margin-top: 7px; }
.sec2 + .p { margin-top: 8px; }
.in { padding-left: 13px; }
.sh { width: 353px; }
.last { white-space: nowrap; }
.p code { font: 7.5px/11px "Liberation Mono", monospace; }
.sb.ok { width: 15px; padding: 4px 0 0; margin-left: 1px; color: #777; }
.to { height: 32px; }

/* guest taskbar */
.taskbar { position: absolute; left: 0; top: 741px; width: 1023px; height: 27px; display: flex; align-items: center; background: linear-gradient(90deg, rgba(24,31,31,.98) 0 26%, rgba(36,44,44,.93) 29% 90%, rgba(28,36,36,.97) 94%); box-shadow: 0 -1px 8px 2px rgba(0,0,0,.6); color: #c3cfcf; font-size: 12.5px; padding-left: 2px; }
.suse { width: 22px; height: 22px; margin-top: 3px; }
.dots { display: flex; gap: 2px; margin-left: 7px; }
.dots i { width: 6px; height: 5px; border-radius: 2px; background: #cfdada; }
.pager { margin-left: 6px; display: flex; flex-direction: column; gap: 2px; margin-top: 1px; }
.pager i { width: 15px; height: 12px; border: 1px solid #697272; border-radius: 3px; }
.pager i:first-child { background: #929a9a; box-shadow: inset 0 0 0 1px #bcc; }
.cabt { width: 14px; height: 15px; margin-left: 13px; margin-top: 2px; }
.task { display: flex; align-items: center; white-space: nowrap; height: 20px; }
.task svg { width: 15px; height: 15px; margin-right: 5px; }
.task span { overflow: hidden; -webkit-mask-image: linear-gradient(90deg, #000 78%, transparent); mask-image: linear-gradient(90deg, #000 78%, transparent); }
.k1 { width: 138px; margin-left: 16px; }
.k1 span { letter-spacing: -.15px; }
.k2 { width: 142px; margin-left: 15px; }
.k3 { width: 110px; margin-left: 10px; }
.k3 span { -webkit-mask-image: none; mask-image: none; }
.k4 { width: 149px; margin-left: 39px; border: 1px solid #6fa060; border-radius: 4px; padding-left: 5px; font-size: 11.5px; }
.k4 span { width: 115px; }
.num { width: 24px; height: 24px; line-height: 24px; text-align: center; font-size: 11px; margin-left: 9px; }
.tray { height: 20px; width: 20px; }
.y1 { margin-left: 7px; } .y2 { margin-left: 8px; width: 18px; }
.us { width: 18px; margin-left: 11px; letter-spacing: .5px; -webkit-text-stroke: .3px #c3cfcf; }
.y3 { width: 17px; height: 15px; margin-left: 9px; } .y4 { width: 20px; height: 16px; margin-left: 10px; } .y5 { margin-left: 9px; width: 20px; }
.tri { width: 8px; height: 5px; margin-left: 11px; }
.time { font-size: 17px; margin-left: 10px; width: 52px; letter-spacing: -.4px; }
.cash { width: 12px; height: 14px; margin-left: 6px; }

.vm-status { flex: 1; display: flex; align-items: center; justify-content: flex-end; gap: 5px; padding-right: 17px; font: 12px/16px "Liberation Sans", sans-serif; }
.vm-status svg { width: 16px; height: 16px; }
.vm-status span { margin-left: -1px; }
.vm-status b { border-left: 1px solid #a9a3a0; height: 15px; width: 2px; margin: 0 1px; }
```
